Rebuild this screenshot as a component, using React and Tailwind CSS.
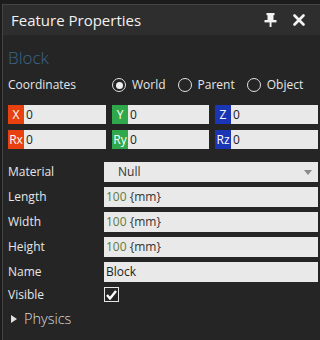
import { X } from "lucide-react";

function Pin() {
  return (
    <svg width="13" height="14" viewBox="0 0 13 14" fill="#f2f2f2">
      <rect x="2.5" y="0" width="8" height="2.2" />
      <rect x="3.5" y="2" width="6" height="5" />
      <rect x="0.5" y="7" width="12" height="2.4" />
      <rect x="5.6" y="9" width="1.9" height="5" />
    </svg>
  );
}

function CoordInput({ label, color }) {
  return (
    <div className="flex h-[19px] bg-[#e9e9e9]">
      <div
        className={`${color} w-[16px] flex items-center justify-center text-white text-[12px] leading-none shrink-0`}
      >
        {label}
      </div>
      <div className="pl-[2px] flex items-center text-[12px] text-[#222]">0</div>
    </div>
  );
}

function Radio({ checked, label }) {
  return (
    <div className="flex items-center gap-[6px]">
      <div className="w-[14px] h-[14px] rounded-full border-[1.5px] border-[#e0e0e0] flex items-center justify-center">
        {checked && <div className="w-[7px] h-[7px] rounded-full bg-[#f0f0f0]" />}
      </div>
      <span className="text-[12px] text-[#e6e6e6]">{label}</span>
    </div>
  );
}

function Field({ label, children }) {
  return (
    <div className="flex items-center h-[20px]">
      <div className="w-[96px] text-[12px] text-[#e6e6e6] shrink-0">{label}</div>
      <div className="flex-1 h-full bg-[#e9e9e9] flex items-center">{children}</div>
    </div>
  );
}

function MmValue() {
  return (
    <span className="pl-[2px] text-[12px]">
      <span className="text-[#5f7a3c]">100</span>
      <span className="text-[#333]"> {"{mm}"}</span>
    </span>
  );
}

export default function App() {
  return (
    <div
      className="w-[320px] h-[340px] bg-[#1c1c1c] pt-[4px] pl-[2px] overflow-hidden"
      style={{ fontFamily: '"Open Sans", "Noto Sans", sans-serif' }}
    >
      <div className="h-full border-l border-t border-[#444] bg-[#252526] flex flex-col">
        {/* header */}
        <div className="h-[30px] bg-[#2e2e2e] flex items-center justify-between pl-[8px] pr-[12px]">
          <span className="text-[15px] text-[#f2f2f2]">Feature Properties</span>
          <div className="flex items-center gap-[13px]">
            <Pin />
            <X size={18} strokeWidth={3.6} color="#f2f2f2" />
          </div>
        </div>

        <div className="pl-[5px] pr-[2px] flex flex-col">
          <div className="mt-[13px] h-[20px] flex items-center text-[17px] font-light text-[#3a6587]">
            Block
          </div>

          <div className="mt-[7px] h-[20px] flex items-center">
            <div className="w-[104px] text-[12px] text-[#e6e6e6]">Coordinates</div>
            <div className="flex items-center gap-[12px]">
              <Radio checked label="World" />
              <Radio label="Parent" />
              <Radio label="Object" />
            </div>
          </div>

          <div className="mt-[10px] grid grid-cols-[98px_97px_1fr] gap-x-[6px] gap-y-[6px]">
            <CoordInput label="X" color="bg-[#e8400f]" />
            <CoordInput label="Y" color="bg-[#2ea84a]" />
            <CoordInput label="Z" color="bg-[#1a36b4]" />
            <CoordInput label="Rx" color="bg-[#e8400f]" />
            <CoordInput label="Ry" color="bg-[#2ea84a]" />
            <CoordInput label="Rz" color="bg-[#1a36b4]" />
          </div>

          <div className="mt-[13px] flex flex-col gap-[5px]">
            <Field label="Material">
              <span className="pl-[14px] text-[12px] text-[#333] flex-1">Null</span>
              <svg width="8" height="5" viewBox="0 0 8 5" className="mr-[6px]">
                <path d="M0 0 L8 0 L4 5 Z" fill="#8a8a8a" />
              </svg>
            </Field>
            <Field label="Length">
              <MmValue />
            </Field>
            <Field label="Width">
              <MmValue />
            </Field>
            <Field label="Height">
              <MmValue />
            </Field>
            <Field label="Name">
              <span className="pl-[2px] text-[12px] text-[#222]">Block</span>
            </Field>
          </div>

          <div className="mt-[5px] h-[15px] flex items-center">
            <div className="w-[96px] text-[12px] text-[#e6e6e6]">Visible</div>
            <div className="w-[15px] h-[15px] border-[1.5px] border-[#e6e6e6] flex items-center justify-center">
              <svg width="11" height="10" viewBox="0 0 11 10">
                <path d="M1 5 L4 8.5 L10 1" stroke="#ffffff" strokeWidth="2.4" fill="none" />
              </svg>
            </div>
          </div>

          <div className="mt-[7px] h-[20px] flex items-center pl-[3px]">
            <svg width="6" height="8" viewBox="0 0 6 8" className="mr-[7px]">
              <path d="M0 0 L6 4 L0 8 Z" fill="#e0e0e0" />
            </svg>
            <span className="text-[14.5px] font-light text-[#dcdcdc]">Physics</span>
          </div>
        </div>
      </div>
    </div>
  );
}
